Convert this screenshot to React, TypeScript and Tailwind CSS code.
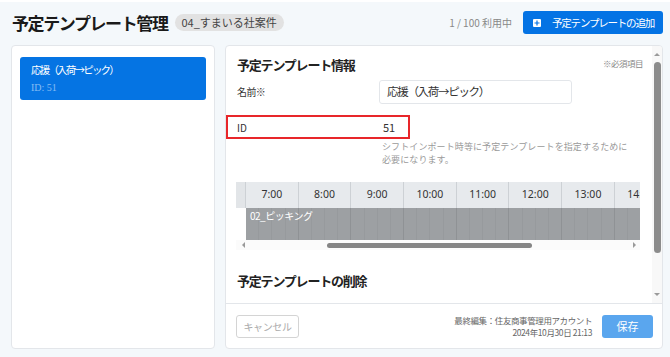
import { } from 'react'

const hours = ['7:00', '8:00', '9:00', '10:00', '11:00', '12:00', '13:00', '14:00']

function PlusSquare() {
  return (
    <svg width="8" height="8" viewBox="0 0 8 8" className="shrink-0">
      <rect x="0" y="0" width="8" height="8" rx="1" fill="white" />
      <path d="M4 1.5v5M1.5 4h5" stroke="#0473e4" strokeWidth="1.2" />
    </svg>
  )
}

function Timeline() {
  return (
    <div className="mt-[16px] -ml-[1px] w-[404px] overflow-hidden">
      {/* hours header */}
      <div className="flex h-[26px] bg-[#e7eaed]">
        <div className="w-[10px] shrink-0 border-r border-[#cdd1d5] bg-[#e2e5e8]" />
        {hours.map((h) => (
          <div
            key={h}
            className="w-[52.7px] shrink-0 border-r border-[#cdd1d5] flex items-center justify-center text-[10.5px] font-['Noto_Sans',sans-serif] text-[#333]"
          >
            {h}
          </div>
        ))}
      </div>
      {/* plan row */}
      <div className="relative flex h-[32px]">
        <div className="w-[10px] shrink-0 bg-white" />
        {hours.map((h) => (
          <div key={h} className="w-[52.7px] shrink-0 flex border-r border-[#8f9295] bg-[#9da0a3]">
            {[0, 1, 2, 3].map((q) => (
              <div key={q} className="flex-1 border-r border-[#979a9d] last:border-r-0" />
            ))}
          </div>
        ))}
        <span className="absolute left-[14px] top-[1px] leading-[14px] text-[10px] tracking-[-0.5px] text-white">
          02_ピッキング
        </span>
      </div>
      {/* horizontal scrollbar */}
      <div className="h-[10px] flex items-center bg-[#fbfbfb] pl-[6px] pr-[4px]">
        <div className="w-0 h-0 border-y-[3px] border-y-transparent border-r-[3px] border-r-[#9a9a9a]" />
        <div className="ml-[82px] w-[205px] h-[5px] rounded-full bg-[#858585]" />
        <div className="flex-1" />
        <div className="w-0 h-0 border-y-[3px] border-y-transparent border-l-[3px] border-l-[#9a9a9a]" />
      </div>
    </div>
  )
}

export default function App() {
  return (
    <div className="w-[670px] h-[357px] bg-[#f4f8fb] border-t-2 border-white flex flex-col overflow-hidden font-['Noto_Sans_CJK_JP',sans-serif] text-[#333]">
      {/* Header */}
      <header className="h-[43px] shrink-0 flex items-center pl-[12px] pr-[7px] pb-[2px]">
        <h1 className="text-[17px] font-bold tracking-[-1.4px] text-[#1a1a1a]">予定テンプレート管理</h1>
        <span className="ml-[7px] h-[17px] px-[7px] rounded-full bg-[#e2e2e2] text-[11px] leading-[17px] text-[#444]">
          04_すまいる社案件
        </span>
        <div className="flex-1" />
        <span className="text-[10px] text-[#888]">1 / 100 利用中</span>
        <button className="ml-[11px] w-[140px] h-[23px] bg-[#0473e4] rounded-[3px] flex items-center pl-[10px] text-white text-[10.5px] tracking-[-1.2px]">
          <PlusSquare />
          <span className="ml-[11px]">予定テンプレートの追加</span>
        </button>
      </header>

      {/* Main */}
      <div className="flex-1 flex gap-[10px] pl-[11px] pr-[7px] pb-[8px]">
        {/* Template list */}
        <aside className="w-[204px] shrink-0 bg-white border border-[#e3e6ea] rounded-[4px] pt-[11px] px-[8px]">
          <div className="h-[43px] bg-[#0574e3] rounded-[3px] pl-[11px] pt-[5px]">
            <p className="text-[10.5px] leading-[15px] tracking-[-1.8px] text-white">応援（入荷→ピック）</p>
            <p className="mt-[4px] text-[10px] leading-[14px] font-['Liberation_Serif',serif] text-[#86bdf3]">ID: 51</p>
          </div>
        </aside>

        {/* Detail */}
        <section className="flex-1 bg-white border border-[#e3e6ea] rounded-[4px] flex flex-col overflow-hidden">
          <div className="flex-1 flex min-h-0">
            <div className="flex-1 pl-[11px] pr-[9px] pt-[9px]">
              <div className="flex justify-between items-start h-[20px]">
                <h2 className="text-[13px] leading-[20px] font-bold tracking-[-1.2px] text-[#222]">予定テンプレート情報</h2>
                <span className="text-[8.5px] leading-[16px] tracking-[-0.5px] text-[#888]">※必須項目</span>
              </div>

              <div className="mt-[5px] flex items-start">
                <span className="w-[142px] pt-[4px] text-[10px] leading-[16px] tracking-[-0.6px]">名前※</span>
                <div className="w-[193px] h-[24px] border border-[#e3e6ea] rounded-[3px] px-[7px] flex items-center text-[11.5px] tracking-[-1.3px] text-[#333]">
                  応援（入荷→ピック）
                </div>
              </div>

              <div className="mt-[11px] -ml-[11px] w-[184px] h-[24px] border-2 border-[#e8262a] flex items-center pl-[9px] text-[10px]">
                <span className="w-[146px]">ID</span>
                <span className="text-[11px]">51</span>
              </div>

              <div className="mt-[1px] ml-[145px] text-[9px] leading-[13px] tracking-[0.1px] text-[#9a9a9a] whitespace-nowrap">
                <p>シフトインポート時等に予定テンプレートを指定するために</p>
                <p>必要になります。</p>
              </div>

              <Timeline />

              <h2 className="mt-[21px] text-[13px] leading-[20px] font-bold tracking-[-1.2px] text-[#222]">予定テンプレートの削除</h2>
            </div>

            {/* vertical scrollbar */}
            <div className="w-[10px] shrink-0 bg-[#f8f8f8] flex flex-col items-center pt-[7px] pb-[7px]">
              <div className="w-0 h-0 border-x-[3px] border-x-transparent border-b-[3px] border-b-[#9a9a9a]" />
              <div className="mt-[6px] w-[7px] h-[191px] rounded-full bg-[#8c8c8c]" />
              <div className="flex-1" />
              <div className="w-0 h-0 border-x-[3px] border-x-transparent border-t-[3px] border-t-[#9a9a9a]" />
            </div>
          </div>

          {/* Footer */}
          <div className="h-[45px] shrink-0 border-t border-[#e3e6ea] flex items-center pl-[10px] pr-[9px]">
            <button className="w-[63px] h-[23px] border border-[#d4d4d4] rounded-[3px] text-[10px] tracking-[-0.4px] text-[#aaa]">
              キャンセル
            </button>
            <div className="flex-1" />
            <div className="text-right text-[8.5px] leading-[12px] tracking-[-0.4px] text-[#666]">
              <p>最終編集：住友商事管理用アカウント</p>
              <p>2024年10月30日 21:13</p>
            </div>
            <button className="ml-[10px] w-[51px] h-[23px] bg-[#5aa6ee] rounded-[3px] text-white text-[11px]">保存</button>
          </div>
        </section>
      </div>
    </div>
  )
}
